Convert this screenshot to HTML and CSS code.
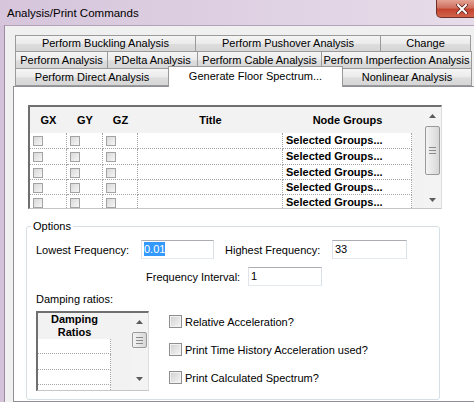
FILE: index.html
```html
<!DOCTYPE html>
<html lang="en">
<head>
    <meta charset="UTF-8">
    <title>Analysis/Print Commands</title>
    <link rel="stylesheet" href="styles.css">
</head>
<body>
    <div class="window">
        <div class="titlebar">
            <span class="title">Analysis/Print Commands</span>
            <div class="close">
                <svg width="12" height="10" viewBox="0 0 12 10">
                    <path d="M2 1 L10 9 M10 1 L2 9" stroke="#5a1f18" stroke-width="3.4" stroke-linecap="square"/>
                    <path d="M2 1 L10 9 M10 1 L2 9" stroke="#ffffff" stroke-width="2" stroke-linecap="square"/>
                </svg>
            </div>
        </div>
        <div class="frame">
            <div class="edge"></div>
            <div class="client">
                <div class="tabs">
                    <div class="tabrow row1">
                        <div class="tab w181">Perform Buckling Analysis</div>
                        <div class="tab w186">Perform Pushover Analysis</div>
                        <div class="tab w91">Change</div>
                    </div>
                    <div class="tabrow row2">
                        <div class="tab w93">Perform Analysis</div>
                        <div class="tab w91">PDelta Analysis</div>
                        <div class="tab w125">Perform Cable Analysis</div>
                        <div class="tab w151">Perform Imperfection Analysis</div>
                    </div>
                    <div class="tabrow row3">
                        <div class="tab w154">Perform Direct Analysis</div>
                        <div class="tab w175 selected">Generate Floor Spectrum...</div>
                        <div class="tab w130">Nonlinear Analysis</div>
                    </div>
                </div>

                <div class="panel">
                    <div class="grid">
                        <div class="gtable">
                            <div class="grow ghead">
                                <div class="c cx">GX</div>
                                <div class="c cy">GY</div>
                                <div class="c cz">GZ</div>
                                <div class="c ct">Title</div>
                                <div class="c cn">Node Groups</div>
                            </div>
                            <div class="grow r16">
                                <div class="c cx"><span class="cb"></span></div>
                                <div class="c cy"><span class="cb"></span></div>
                                <div class="c cz"><span class="cb"></span></div>
                                <div class="c ct"></div>
                                <div class="c cn">Selected Groups...</div>
                            </div>
                            <div class="grow r16">
                                <div class="c cx"><span class="cb"></span></div>
                                <div class="c cy"><span class="cb"></span></div>
                                <div class="c cz"><span class="cb"></span></div>
                                <div class="c ct"></div>
                                <div class="c cn">Selected Groups...</div>
                            </div>
                            <div class="grow">
                                <div class="c cx"><span class="cb"></span></div>
                                <div class="c cy"><span class="cb"></span></div>
                                <div class="c cz"><span class="cb"></span></div>
                                <div class="c ct"></div>
                                <div class="c cn">Selected Groups...</div>
                            </div>
                            <div class="grow">
                                <div class="c cx"><span class="cb"></span></div>
                                <div class="c cy"><span class="cb"></span></div>
                                <div class="c cz"><span class="cb"></span></div>
                                <div class="c ct"></div>
                                <div class="c cn">Selected Groups...</div>
                            </div>
                            <div class="grow">
                                <div class="c cx"><span class="cb"></span></div>
                                <div class="c cy"><span class="cb"></span></div>
                                <div class="c cz"><span class="cb"></span></div>
                                <div class="c ct"></div>
                                <div class="c cn">Selected Groups...</div>
                            </div>
                        </div>
                        <div class="vscroll">
                            <div class="sbtn"><svg width="7" height="4" viewBox="0 0 7 4"><path d="M0 4 L3.5 0 L7 4 Z" fill="#5b5b5b"/></svg></div>
                            <div class="thumb big"><span class="grip"></span></div>
                            <div class="sfill"></div>
                            <div class="sbtn"><svg width="7" height="4" viewBox="0 0 7 4"><path d="M0 0 L3.5 4 L7 0 Z" fill="#5b5b5b"/></svg></div>
                        </div>
                    </div>

                    <fieldset class="options">
                        <legend>Options</legend>
                        <div class="frow first">
                            <span class="lbl l-low">Lowest Frequency:</span>
                            <div class="field f-low"><span class="sel">0.01</span></div>
                            <span class="lbl l-high">Highest Frequency:</span>
                            <div class="field f-high">33</div>
                        </div>
                        <div class="frow second">
                            <span class="lbl l-int">Frequency Interval:</span>
                            <div class="field f-int">1</div>
                        </div>
                        <div class="damp-label">Damping ratios:</div>
                        <div class="damp-row">
                            <div class="dgrid">
                                <div class="dtable">
                                    <div class="dhead">Damping<br>Ratios</div>
                                    <div class="drow"></div>
                                    <div class="drow h16"></div>
                                    <div class="drow"></div>
                                    <div class="drow"></div>
                                </div>
                                <div class="vscroll">
                                    <div class="sbtn"><svg width="7" height="4" viewBox="0 0 7 4"><path d="M0 4 L3.5 0 L7 4 Z" fill="#5b5b5b"/></svg></div>
                                    <div class="thumb small"><span class="grip"></span></div>
                                    <div class="sfill"></div>
                                    <div class="sbtn low"><svg width="7" height="4" viewBox="0 0 7 4"><path d="M0 0 L3.5 4 L7 0 Z" fill="#5b5b5b"/></svg></div>
                                </div>
                            </div>
                            <div class="checks">
                                <label class="check"><span class="box"></span>Relative Acceleration?</label>
                                <label class="check"><span class="box"></span>Print Time History Acceleration used?</label>
                                <label class="check"><span class="box"></span>Print Calculated Spectrum?</label>
                            </div>
                        </div>
                    </fieldset>
                </div>
            </div>
        </div>
    </div>
</body>
</html>
```

FILE: styles.css
```css
body {
    margin: 0;
    width: 474px;
    height: 402px;
    overflow: hidden;
    background-color: #ffffff;
    font-family: "Liberation Sans", Arial, sans-serif;
    font-size: 11px;
    color: #000;
}
.window {
    width: 474px;
    height: 402px;
    display: flex;
    flex-direction: column;
    overflow: hidden;
}
.titlebar {
    height: 25px;
    flex-shrink: 0;
    display: flex;
    align-items: flex-start;
    background: linear-gradient(to right, #d6c5db, #e0d3e4 60%, #e7dce9);
}
.title {
    margin: 6px 0 0 7px;
    line-height: 14px;
    font-size: 11.5px;
    color: #000;
}
.close {
    margin-left: auto;
    margin-right: -13px;
    width: 51px;
    height: 18px;
    flex-shrink: 0;
    box-sizing: border-box;
    border: 1px solid #70302a;
    border-top: none;
    border-radius: 0 0 5px 5px;
    background: linear-gradient(#e4a293, #d07060 45%, #c4432f 55%, #d0634c);
    display: flex;
    align-items: center;
    justify-content: center;
}
.frame {
    flex: 1;
    display: flex;
    min-height: 0;
}
.edge {
    width: 4px;
    flex-shrink: 0;
    background-color: #d2c1d8;
    border-right: 1px solid #9d8da4;
}
.client {
    flex: 1;
    min-width: 0;
    overflow: hidden;
    background-color: #f0f0f0;
    border-top: 1px solid #b3a3b8;
    padding: 9px 0 0 8px;
    display: flex;
    flex-direction: column;
}
.tabs {
    flex-shrink: 0;
}
.tabrow {
    display: flex;
    margin-left: 2px;
}
.tab {
    box-sizing: border-box;
    flex-shrink: 0;
    height: 17px;
    margin-right: -1px;
    border: 1px solid #9a9a9a;
    background: linear-gradient(#f5f5f5, #ebebeb 50%, #dddddd 55%, #d6d6d6);
    text-align: center;
    line-height: 15px;
    white-space: nowrap;
}
.row2, .row3 {
    margin-top: -1px;
}
.row2 .tab, .row3 .tab {
    height: 18px;
    line-height: 16px;
}
.row3 .tab.selected {
    position: relative;
    z-index: 1;
    height: 21px;
    margin-top: -2px;
    border-bottom: none;
    background: #ffffff;
    line-height: 18px;
}
.w181 { width: 181px; }
.w186 { width: 186px; }
.w91 { width: 91px; }
.w93 { width: 93px; }
.w125 { width: 125px; }
.w151 { width: 151px; }
.w154 { width: 154px; }
.w175 { width: 175px; }
.w130 { width: 130px; }

.panel {
    flex: 1;
    flex-shrink: 0;
    margin-top: -1px;
    width: 480px;
    background-color: #ffffff;
    border: 1px solid #8e9097;
    padding: 18px 0 0 14px;
}

/* node group grid */
.grid {
    display: flex;
    width: 414px;
    height: 104px;
    box-sizing: border-box;
    border-top: 2px solid #6f6f6f;
    border-left: 2px solid #6f6f6f;
    border-right: 1px solid #dedede;
    border-bottom: 1px solid #c6c6c6;
    background-color: #f2f2f2;
    overflow: hidden;
}
.gtable {
    width: 382px;
    flex-shrink: 0;
    overflow: hidden;
}
.grow {
    display: flex;
    height: 15px;
}
.grow.r16 {
    height: 16px;
}
.grow.ghead {
    height: 26px;
}
.c {
    box-sizing: border-box;
    flex-shrink: 0;
    background-color: #ffffff;
    border-right: 1px dotted #a6a6a6;
    border-bottom: 1px dotted #a6a6a6;
    font-weight: bold;
    white-space: nowrap;
    overflow: hidden;
}
.ghead .c {
    background-color: #f2f2f2;
    border: none;
    text-align: center;
    line-height: 26px;
}
.cx { width: 37px; }
.cy { width: 36px; }
.cz { width: 35px; }
.ct { width: 145px; }
.cn {
    width: 129px;
    padding: 1px 0 0 3px;
    line-height: 13px;
}
.ghead .cn {
    padding: 0;
}
.cb {
    display: block;
    width: 10px;
    height: 10px;
    box-sizing: border-box;
    margin: 3px 0 0 3px;
    border: 1px solid #a3a3a3;
    background: linear-gradient(135deg, #d9d9d9, #f6f6f6);
}

/* scrollbars */
.vscroll {
    width: 17px;
    flex-shrink: 0;
    display: flex;
    flex-direction: column;
    background-color: #f3f3f3;
}
.grid .vscroll {
    margin-left: 12px;
}
.sbtn {
    height: 17px;
    display: flex;
    align-items: center;
    justify-content: center;
}
.sbtn.low {
    margin-bottom: 3px;
}
.sfill {
    flex: 1;
}
.thumb {
    margin: 2px 1px 0 1px;
    box-sizing: border-box;
    border: 1px solid #9a9a9a;
    border-radius: 2px;
    background: linear-gradient(to right, #f3f3f3, #e6e6e6 50%, #d6d6d6);
    display: flex;
    align-items: center;
    justify-content: center;
}
.thumb.big {
    height: 49px;
}
.thumb.small {
    height: 16px;
}
.grip {
    width: 7px;
    height: 5px;
    border-top: 1px solid #8a8a8a;
    border-bottom: 1px solid #8a8a8a;
    background: linear-gradient(#8a8a8a, #8a8a8a) center / 7px 1px no-repeat;
}

/* options group */
.options {
    margin: 10px 0 0 -2px;
    width: 414px;
    box-sizing: border-box;
    border: 1px solid #d5dfe5;
    border-radius: 3px;
    padding: 0 0 8px 9px;
}
.options legend {
    margin-left: -5px;
    padding: 0 2px;
    line-height: 14px;
}
.frow {
    display: flex;
    align-items: center;
}
.frow.first {
    margin-top: 7px;
}
.frow.second {
    margin-top: 8px;
    padding-left: 110px;
}
.lbl {
    flex-shrink: 0;
}
.l-low { width: 105px; }
.l-high { width: 107px; margin-left: 11px; }
.l-int { width: 102px; }
.field {
    box-sizing: border-box;
    height: 19px;
    border: 1px solid #abadb3;
    border-color: #abadb3 #dbdfe6 #e3e9ef #e2e3ea;
    background-color: #ffffff;
    padding: 1px 0 0 2px;
    line-height: 15px;
}
.f-low { width: 73px; }
.f-high { width: 75px; }
.f-int { width: 74px; }
.sel {
    display: inline-block;
    background-color: #3399ff;
    color: #ffffff;
    line-height: 14px;
}
.damp-label {
    margin-top: 6px;
    line-height: 14px;
}
.damp-row {
    display: flex;
    margin-top: 5px;
}
.dgrid {
    display: flex;
    width: 113px;
    height: 80px;
    box-sizing: border-box;
    border-top: 2px solid #6f6f6f;
    border-left: 2px solid #6f6f6f;
    border-right: 1px solid #dedede;
    border-bottom: 1px solid #c6c6c6;
    background-color: #f2f2f2;
    overflow: hidden;
}
.dtable {
    width: 73px;
    flex-shrink: 0;
    margin-right: 20px;
}
.dhead {
    height: 26px;
    text-align: center;
    font-weight: bold;
    line-height: 13px;
}
.drow {
    box-sizing: border-box;
    height: 15px;
    background-color: #ffffff;
    border-right: 1px dotted #a6a6a6;
    border-bottom: 1px dotted #a6a6a6;
}
.drow.h16 {
    height: 16px;
}
.checks {
    margin-left: 20px;
    display: flex;
    flex-direction: column;
    gap: 15px;
    padding-top: 4px;
}
.check {
    display: flex;
    align-items: center;
    height: 13px;
    white-space: nowrap;
}
.box {
    width: 13px;
    height: 13px;
    box-sizing: border-box;
    margin-right: 3px;
    border: 1px solid #8e8e8e;
    background: linear-gradient(135deg, #cfcfcf, #f7f7f7);
    box-shadow: inset 0 0 0 1px #f2f2f2;
}
```
